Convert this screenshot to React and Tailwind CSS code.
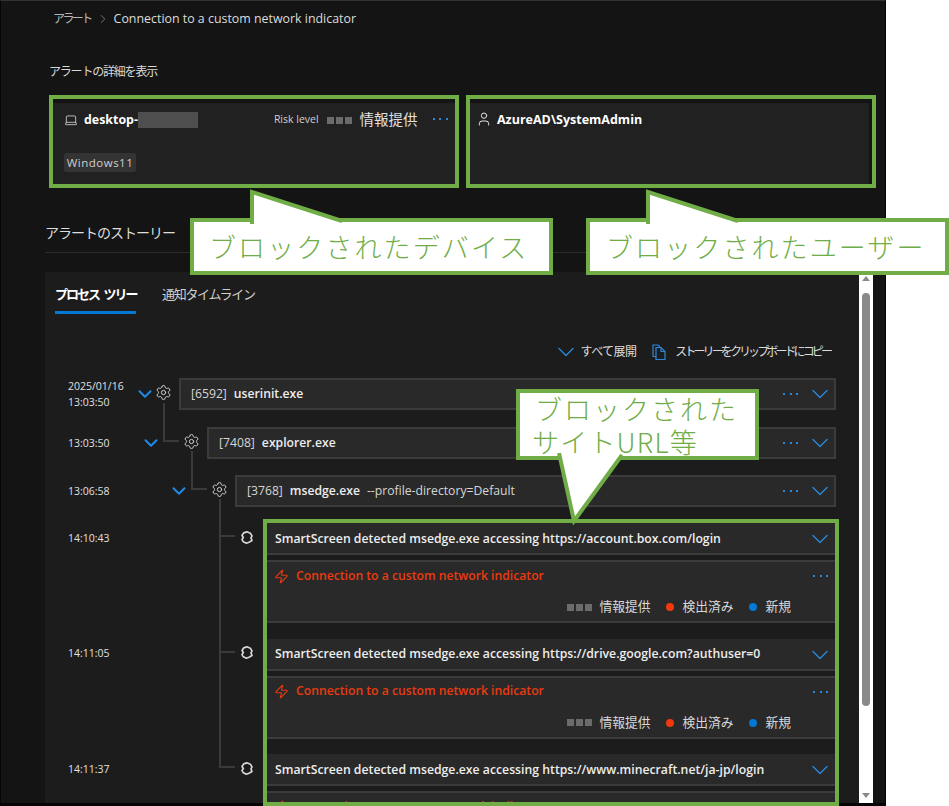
import { ChevronDown, Laptop, Settings, User, Zap, ChevronRight } from 'lucide-react';

const TREE = [
  { time: ['2025/01/16', '13:03:50'], pid: '[6592]', name: 'userinit.exe', spacer: 'w-[69px]', gap: 'ml-[2px]', mt: '' },
  { time: ['13:03:50'], pid: '[7408]', name: 'explorer.exe', spacer: 'w-[75px]', gap: 'ml-[24px]', mt: 'mt-[17px]', elbow: 'left-[95px] -top-[24px] h-[39px]' },
  { time: ['13:06:58'], pid: '[3768]', name: 'msedge.exe', args: '--profile-directory=Default', spacer: 'w-[103px]', gap: 'ml-[24px]', mt: 'mt-[16px]', elbow: 'left-[123px] -top-[24px] h-[39px]' },
];

const EVENTS = [
  { time: '14:10:43', url: 'https://account.box.com/login', elbow: '-top-[24px] h-[38px]' },
  { time: '14:11:05', url: 'https://drive.google.com?authuser=0', elbow: '-top-[102px] h-[116px]' },
  { time: '14:11:37', url: 'https://www.minecraft.net/ja-jp/login', elbow: '-top-[102px] h-[116px]' },
];

function Dots() {
  return (
    <div className="flex gap-[4.5px]">
      <span className="w-[2px] h-[2px] bg-[#2b88d8]" />
      <span className="w-[2px] h-[2px] bg-[#2b88d8]" />
      <span className="w-[2px] h-[2px] bg-[#2b88d8]" />
    </div>
  );
}

function Squares() {
  return (
    <div className="flex gap-[2px]">
      <span className="w-[7px] h-[7px] bg-[#6b6b6b]" />
      <span className="w-[7px] h-[7px] bg-[#6b6b6b]" />
      <span className="w-[7px] h-[7px] bg-[#6b6b6b]" />
    </div>
  );
}

function EventIcon() {
  return (
    <svg width="12" height="13" viewBox="0 0 36 38" fill="none" stroke="#d8d8d8" strokeWidth="5" strokeLinejoin="round">
      <path d="M8 5 18 2 28 6 33 14 30 20 33 28 24 33 16 36 6 31 3 25 7 19 3 13Z" />
    </svg>
  );
}

function CopyIcon() {
  return (
    <svg width="14" height="16" viewBox="0 0 14 16" fill="none" stroke="#2b88d8" strokeWidth="1.2">
      <path d="M4 12.5H1V1h5l2 2" />
      <path d="M4 3.5h5l4 4v8H4Z" />
      <path d="M9 3.5v4h4" />
    </svg>
  );
}

function Callout({ box, tail, viewBox, points, lines, children }) {
  return (
    <div className={`absolute border-4 border-[#70ad47] bg-white ${box}`}>
      {children}
      <svg className={`absolute ${tail}`} viewBox={viewBox} fill="none">
        <polygon points={points} fill="white" />
        <polyline points={lines} stroke="#70ad47" strokeWidth="4" />
      </svg>
    </div>
  );
}

export default function App() {
  return (
    <div className="relative w-[949px] h-[806px] bg-white overflow-hidden font-['Open_Sans','Noto_Sans_CJK_JP',sans-serif]">
      <div className="w-[886px] h-[806px] bg-[#141414] border-t border-l border-r border-b-[3px] border-[#050505] border-t-[#333333] flex flex-col text-[#e6e6e6]">
        <div className="flex items-center h-[14px] mt-[11px] ml-[52px] text-[12.4px] leading-[14px]">
          <span className="text-[#b5b5b5] tracking-[-2.6px] text-[12px]">アラート</span>
          <ChevronRight size={14} strokeWidth={1.2} className="ml-[5px] mr-[4px] text-[#a0a0a0]" />
          <span className="text-[#dcdcdc]">Connection to a custom network indicator</span>
        </div>

        <div className="mt-[38px] ml-[48px] text-[12px] leading-[16px] tracking-[-1.2px] text-[#d8d8d8]">アラートの詳細を表示</div>

        <div className="flex mt-[23px] ml-[52px] h-[81px]">
          <div className="relative w-[402px] bg-[#212121]">
            <div className="flex items-center h-[34px] pl-[11px]">
              <Laptop size={14} strokeWidth={1.3} />
              <span className="ml-[6px] text-[12.4px] font-bold text-white">desktop-</span>
              <span className="w-[60px] h-[16px] bg-[#4e4e4e] blur-[0.5px]" />
              <span className="ml-[76px] text-[10.5px] text-[#d0d0d0]">Risk level</span>
              <div className="ml-[8px]"><Squares /></div>
              <span className="ml-[8px] text-[14.5px] text-[#e0e0e0]">情報提供</span>
              <div className="ml-[15px] -mt-[3px]"><Dots /></div>
            </div>
            <div className="mt-[16px] ml-[11px] w-[72px] h-[19px] bg-[#333333] rounded-[2px] flex items-center justify-center pt-[1px] text-[11.5px] tracking-[0.5px] text-[#d0d0d0]">Windows11</div>
          </div>
          <div className="ml-[15px] w-[399px] bg-[#212121] flex items-start pt-[9px] pl-[6px] h-full">
            <User size={16} strokeWidth={1.3} className="-mt-[1px] text-white" />
            <span className="ml-[5px] text-[12.5px] leading-[15px] font-bold text-white">AzureAD\SystemAdmin</span>
          </div>
        </div>

        <div className="mt-[39px] ml-[44px] text-[14px] leading-[20px] tracking-[-1px] text-[#dedede]">アラートのストーリー</div>
        <div className="mt-[9px] ml-[44px] mr-[26px] h-px bg-[#2b2b2b]" />

        <div className="flex flex-1 mt-[19px] ml-[44px] mr-[12px] min-h-0">
          <div className="flex-1 bg-[#1c1c1c] overflow-hidden">
            <div className="flex pl-[10px] pt-[13px] text-[13px] leading-[18px]">
              <div className="w-[81px] h-[29px] border-b-[3px] border-[#0078d4] font-bold text-white whitespace-nowrap tracking-[-2px] [word-spacing:3px]">プロセス ツリー</div>
              <div className="ml-[26px] text-[#cfcfcf] whitespace-nowrap tracking-[-1.3px]">通知タイムライン</div>
            </div>

            <div className="flex items-center justify-end h-[18px] mt-[29px] pr-[29px] text-[12px] text-[#dcdcdc]">
              <ChevronDown size={28} strokeWidth={1.2} className="-mx-[6px] -my-[5px] text-[#2b88d8]" />
              <span className="ml-[7px] tracking-[-0.6px]">すべて展開</span>
              <div className="ml-[16px]"><CopyIcon /></div>
              <span className="ml-[9px] tracking-[-2.9px] whitespace-nowrap">ストーリーをクリップボードにコピー</span>
            </div>

            <div className="mt-[17px] pl-[23px] pr-[23px]">
              {TREE.map((row) => (
                <div key={row.pid} className={`relative flex items-center h-[32px] ${row.mt}`}>
                  {row.elbow && <div className={`absolute w-[16px] border-l-2 border-b-2 border-[#3a3a3a] ${row.elbow}`} />}
                  <div className={`shrink-0 text-[10.5px] leading-[16px] text-[#e0e0e0] ${row.spacer}`}>
                    {row.time.map((t) => <div key={t}>{t}</div>)}
                  </div>
                  <ChevronDown size={22} strokeWidth={2.2} className="shrink-0 -mx-[3px] text-[#1e8ae6]" />
                  <Settings size={17} strokeWidth={1.4} className={`shrink-0 -mt-[3px] text-[#cfcfcf] ${row.gap}`} />
                  <div className="flex-1 ml-[7px] h-full flex items-center bg-[#292929] border-2 border-[#3b3b3b] pl-[10px] text-[12.2px]">
                    <span className="text-[#d6d6d6]">{row.pid}</span>
                    <span className="ml-[7px] font-semibold text-[#ededed]">{row.name}</span>
                    {row.args && <span className="ml-[7px] text-[#d6d6d6]">{row.args}</span>}
                    <div className="ml-auto"><Dots /></div>
                    <ChevronDown size={28} strokeWidth={1.2} className="ml-[8px] text-[#2b88d8]" />
                  </div>
                </div>
              ))}

              <div className="mt-[16px]">
                {EVENTS.map((ev) => (
                  <div key={ev.time} className="relative flex h-[115.5px]">
                    <div className={`absolute left-[151px] w-[16px] border-l-2 border-b-2 border-[#3a3a3a] ${ev.elbow}`} />
                    <div className="w-[199px] h-[31px] shrink-0 flex items-center justify-between pr-[14px] text-[10.5px] text-[#e0e0e0]">
                      <span>{ev.time}</span>
                      <div className="-mt-[3px]"><EventIcon /></div>
                    </div>
                    <div className="flex-1">
                      <div className="h-[32px] flex items-center bg-[#292929] border-b-2 border-[#3b3b3b] pt-[2px] pl-[8px] text-[12.25px] font-semibold text-[#ededed]">
                        <span>SmartScreen detected msedge.exe accessing {ev.url}</span>
                        <ChevronDown size={28} strokeWidth={1.2} className="ml-auto mr-[2px] text-[#2b88d8]" />
                      </div>
                      <div className="mt-[5px] h-[63px] bg-[#292929] border-t-2 border-b-2 border-[#3b3b3b] pl-[8px] pr-[8px]">
                        <div className="flex items-center h-[28px]">
                          <Zap size={15} strokeWidth={1.8} className="-ml-[1px] text-[#e83b10]" />
                          <span className="ml-[7px] text-[12.2px] font-semibold text-[#e83b10]">Connection to a custom network indicator</span>
                          <div className="ml-auto"><Dots /></div>
                        </div>
                        <div className="flex items-center justify-end h-[18px] mt-[8px] pr-[37px] text-[12.75px] text-[#d8d8d8]">
                          <Squares />
                          <span className="ml-[8px]">情報提供</span>
                          <span className="ml-[15px] w-[8px] h-[8px] rounded-full bg-[#f03a0e]" />
                          <span className="ml-[9px]">検出済み</span>
                          <span className="ml-[15px] w-[8px] h-[8px] rounded-full bg-[#0078d4]" />
                          <span className="ml-[9px]">新規</span>
                        </div>
                      </div>
                    </div>
                  </div>
                ))}
              </div>
            </div>
          </div>

          <div className="w-[14px] bg-white flex flex-col items-center">
            <div className="mt-[4px] w-0 h-0 border-x-[4px] border-x-transparent border-b-[5px] border-b-[#8a8a8a]" />
            <div className="mt-[12px] w-[8px] h-[413px] rounded-[4px] bg-[#8a8a8a]" />
            <div className="mt-auto mb-[5px] w-0 h-0 border-x-[4px] border-x-transparent border-t-[5px] border-t-[#8a8a8a]" />
          </div>
        </div>
      </div>

      <div className="absolute left-[49px] top-[95px] w-[410px] h-[93px] border-4 border-[#70ad47]" />
      <div className="absolute left-[466px] top-[95px] w-[410px] h-[93px] border-4 border-[#70ad47]" />
      <div className="absolute left-[263px] top-[519px] w-[576px] h-[287px] border-4 border-[#70ad47]" />

      <Callout
        box="left-[190px] top-[218px] w-[363px] h-[57px]"
        tail="left-[56px] -top-[34px] w-[100px] h-[40px]"
        viewBox="0 0 100 40"
        points="2,4 2,36 98,36"
        lines="2,36 2,4 92,33"
      >
        <div className="pl-[15px] pt-[1px] h-full flex items-center text-[27px] font-light tracking-[2.1px] text-[#70ad47] whitespace-nowrap font-['Noto_Sans_CJK_JP',sans-serif]">ブロックされたデバイス</div>
      </Callout>

      <Callout
        box="left-[586px] top-[218px] w-[363px] h-[57px]"
        tail="left-[56px] -top-[34px] w-[100px] h-[40px]"
        viewBox="0 0 100 40"
        points="2,4 2,36 98,36"
        lines="2,36 2,4 92,33"
      >
        <div className="pl-[16px] pt-[1px] h-full flex items-center text-[27px] font-light tracking-[2.1px] text-[#70ad47] whitespace-nowrap font-['Noto_Sans_CJK_JP',sans-serif]">ブロックされたユーザー</div>
      </Callout>

      <Callout
        box="left-[516px] top-[389px] w-[243px] h-[71px]"
        tail="left-[36px] top-[60px] w-[70px] h-[72px]"
        viewBox="0 0 70 72"
        points="3,0 68,0 18,68"
        lines="3,0 18,68 66,2"
      >
        <div className="pl-[15px] -mt-[1px] text-[27px] font-light leading-[33px] tracking-[2px] text-[#70ad47] whitespace-nowrap font-['Noto_Sans_CJK_JP',sans-serif]">
          <div>ブロックされた</div>
          <div className="-ml-[3px] tracking-[1.2px]">サイトURL等</div>
        </div>
      </Callout>
    </div>
  );
}
